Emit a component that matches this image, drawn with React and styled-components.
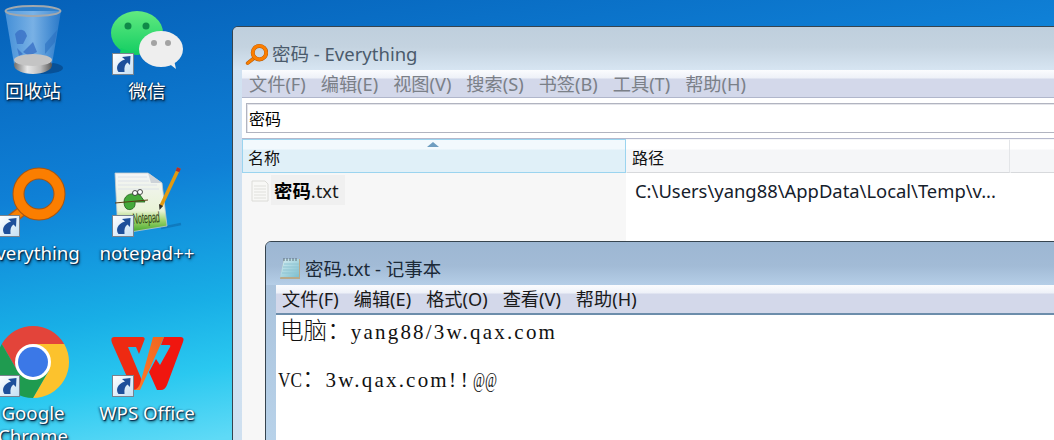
import React from "react";
import styled, { createGlobalStyle } from "styled-components";

const UI_FONT = `"Noto Sans", "Noto Sans CJK SC", sans-serif`;

const GlobalStyle = createGlobalStyle`
  html, body {
    margin: 0;
    padding: 0;
    overflow: hidden;
    font-family: ${UI_FONT};
  }
`;

const Desktop = styled.div`
  position: relative;
  width: 1054px;
  height: 440px;
  overflow: hidden;
  background: linear-gradient(170deg, #0560b8 0, #0f80d6 200px, #18aee6 330px, #2ac8f0 400px, #5fdaf6 470px);
`;

const IconGrid = styled.div`
  display: grid;
  grid-template-columns: 114px 114px;
  grid-template-rows: 162px 160px 118px;
  margin-left: -24px;
  width: 228px;
`;

const DesktopItem = styled.div`
  display: flex;
  flex-direction: column;
  align-items: center;
`;

const IconBox = styled.div`
  position: relative;
  width: 76px;
  height: 79px;
  flex: none;
  & > svg {
    display: block;
    overflow: visible;
  }
`;

const ItemLabel = styled.div`
  width: 108px;
  text-align: center;
  color: #fff;
  font-size: 18.7px;
  line-height: 23px;
  text-shadow: 1px 1px 1px #02264a, -1px 0 2px rgba(2, 38, 74, 0.55), 1px 2px 3px rgba(0, 0, 0, 0.6);
`;

const Badge = styled.svg`
  position: absolute;
  left: 3px;
  top: 53px;
  width: 22px;
  height: 22px;
`;

const Window = styled.section`
  position: absolute;
  left: ${(p) => p.$left}px;
  top: ${(p) => p.$top}px;
  width: ${(p) => p.$width}px;
  height: ${(p) => p.$height}px;
  box-sizing: border-box;
  border: 1px solid #36444f;
  border-radius: 6px 6px 0 0;
  padding-left: ${(p) => p.$chrome}px;
  background: ${(p) => p.$frame};
  display: flex;
  flex-direction: column;
  overflow: hidden;
`;

const TitleBar = styled.header`
  height: 43px;
  flex: none;
  margin-left: ${(p) => -p.$chrome}px;
  padding-left: ${(p) => p.$inset}px;
  padding-top: 15px;
  box-sizing: border-box;
  display: flex;
  align-items: flex-start;
  gap: 4px;
  font-size: 18.5px;
  line-height: 24px;
  white-space: nowrap;
  color: ${(p) => p.$color};
  background: ${(p) => p.$bg};
`;

const MenuBar = styled.nav`
  flex: none;
  height: ${(p) => p.$height}px;
  box-sizing: border-box;
  padding: 0 0 2px ${(p) => p.$inset}px;
  display: flex;
  align-items: center;
  gap: 15px;
  font-size: 18.2px;
  white-space: nowrap;
  color: ${(p) => p.$color};
  background: linear-gradient(#fbfcfe 0, #eef1f8 8px, #d3d8ea 9px, #d3d8ea 100%);
  border-bottom: ${(p) => p.$rule};
`;

const Client = styled.div`
  flex: 1;
  background: #fff;
  display: flex;
  flex-direction: column;
`;

const SearchArea = styled.div`
  flex: none;
  height: 41px;
  box-sizing: border-box;
  padding: 5px 0 0 4px;
  border-bottom: 1px solid #b5b8cc;
`;

const SearchInput = styled.div`
  height: 30px;
  box-sizing: border-box;
  border: 1px solid #b1b4c0;
  border-right: none;
  box-shadow: inset 1px 1px 0 #e4e5ea;
  padding-left: 2px;
  font-size: 16px;
  line-height: 30px;
  color: #000;
`;

const ListGrid = styled.div`
  flex: 1;
  display: grid;
  grid-template-columns: 384px 384px 1fr;
  grid-template-rows: 34px 1fr;
`;

const HeaderCell = styled.div`
  position: relative;
  box-sizing: border-box;
  padding: 6px 0 0 5px;
  font-size: 16px;
  line-height: 24px;
  color: #111;
  background: ${(p) =>
    p.$sorted
      ? "linear-gradient(#f2f9fd 0, #f2f9fd 9px, #e0f0f8 10px)"
      : "linear-gradient(#fff 0, #fff 9px, #f5f6f8 10px)"};
  border: 1px solid ${(p) => (p.$sorted ? "#9bd4ef" : "transparent")};
  border-bottom-color: ${(p) => (p.$sorted ? "#9bd4ef" : "#d7d9dc")};
  border-right-color: ${(p) => (p.$sorted ? "#9bd4ef" : "#e3e5e8")};
`;

const SortArrow = styled.span`
  position: absolute;
  left: 184px;
  top: 2px;
  width: 0;
  height: 0;
  border-left: 6px solid transparent;
  border-right: 6px solid transparent;
  border-bottom: 5px solid #6e9dc0;
`;

const NameColumn = styled.div`
  background: #f7f7f7;
  padding: 2px 0 0 9px;
  display: flex;
  align-items: flex-start;
  gap: 2px;
`;

const FileIcon = styled.svg`
  width: 18px;
  height: 22px;
  margin-top: 5px;
  flex: none;
`;

const FileName = styled.div`
  background: #f0f0f0;
  height: 30px;
  padding: 0 6px 0 3px;
  font-size: 18.4px;
  line-height: 32px;
  color: #1a1a1a;
  & b {
    color: #000;
    font-weight: 700;
  }
`;

const PathCell = styled.div`
  background: #fff;
  padding: 4px 0 0 9px;
  font-size: 18.4px;
  line-height: 28px;
  color: #15202b;
  white-space: nowrap;
`;

const EmptyCell = styled.div`
  background: #fff;
`;

const EditArea = styled.div`
  flex: 1;
  background: #fff;
  padding: 2px 0 0 2px;
  font-family: "Liberation Serif", "Noto Sans CJK SC", serif;
  font-size: 21px;
  letter-spacing: 2.2px;
  line-height: 24px;
  color: #111;
  white-space: pre;
`;

const EditLine = styled.div`
  height: 24px;
  padding-left: ${(p) => p.$indent}px;
`;

const Wide = styled.span`
  font-family: "Noto Sans CJK SC", sans-serif;
  font-size: 23.6px;
  font-weight: 300;
  letter-spacing: 0;
`;

// the original font is fixed-pitch, so wide latin letters get squeezed into its 12px cells
const Squeezed = styled.span`
  display: inline-block;
  width: ${(p) => p.$width}px;
  letter-spacing: 0;
  transform: scaleX(${(p) => p.$scale});
  transform-origin: left center;
`;

const Spaced = styled.span`
  letter-spacing: 5px;
`;

function Shortcut() {
  return (
    <Badge viewBox="0 0 22 22">
      <defs>
        <linearGradient id="badgeBg" x1="0" y1="0" x2="1" y2="1">
          <stop offset="0" stopColor="#ffffff" />
          <stop offset="1" stopColor="#c5dff3" />
        </linearGradient>
      </defs>
      <rect x="0.5" y="0.5" width="21" height="21" fill="url(#badgeBg)" stroke="#77838f" />
      <path d="M10 4 L18.5 3 L18 12 L15.5 9.5 C13 11 12 14 12.5 19 L6.5 19 C3.5 15 5 9 13 6.5 Z" fill="#1d4f9a" />
    </Badge>
  );
}

function RecycleBin() {
  return (
    <svg width="76" height="80" viewBox="0 0 76 80">
      <defs>
        <linearGradient id="binBody" x1="0" y1="0" x2="1" y2="0">
          <stop offset="0" stopColor="#4f97dc" />
          <stop offset="0.5" stopColor="#8dbeec" />
          <stop offset="1" stopColor="#2f7ccb" />
        </linearGradient>
        <linearGradient id="binBase" x1="0" y1="0" x2="1" y2="0">
          <stop offset="0" stopColor="#6e6e6e" />
          <stop offset="0.35" stopColor="#e8e8e8" />
          <stop offset="0.7" stopColor="#bdbdbd" />
          <stop offset="1" stopColor="#555" />
        </linearGradient>
      </defs>
      <ellipse cx="48" cy="68" rx="20" ry="6" fill="#06366c" opacity="0.5" />
      <path d="M10 11 L19 64 C24 76 52 76 57 64 L66 11 Z" fill="url(#binBody)" opacity="0.85" />
      <path d="M50 44 L62 30 L60 42 L50 54 Z" fill="#2c6fc0" opacity="0.6" />
      <path d="M20 34 C24 28 30 28 32 36 L28 44 L22 44 Z M28 52 L38 42 L42 52 L34 56 Z M22 48 L28 54 L24 56 Z" fill="#3a71c6" opacity="0.8" />
      <ellipse cx="38" cy="65" rx="19" ry="9" fill="url(#binBase)" />
      <ellipse cx="38" cy="60" rx="19" ry="6" fill="#c4c4c4" />
      <ellipse cx="38" cy="11" rx="27.5" ry="5" fill="#7fb7ea" fillOpacity="0.35" stroke="#a2a8ad" strokeWidth="2" />
    </svg>
  );
}

function WeChat() {
  return (
    <svg width="76" height="80" viewBox="0 0 76 80">
      <defs>
        <linearGradient id="wxGreen" x1="0" y1="0" x2="0" y2="1">
          <stop offset="0" stopColor="#62ea80" />
          <stop offset="1" stopColor="#12cd62" />
        </linearGradient>
      </defs>
      <ellipse cx="28" cy="33" rx="26" ry="22" fill="url(#wxGreen)" />
      <path d="M12 48 L10 58 L22 52 Z" fill="#14cf64" />
      <ellipse cx="52" cy="49" rx="22" ry="18" fill="#eeeeee" />
      <path d="M58 62 L67 69 L65 60 Z" fill="#eeeeee" />
      <circle cx="19" cy="26" r="3.5" fill="#0f8a48" />
      <circle cx="37" cy="26" r="3.5" fill="#0f8a48" />
      <circle cx="45" cy="43" r="3" fill="#a3a3a3" />
      <circle cx="59" cy="43" r="3" fill="#a3a3a3" />
    </svg>
  );
}

function Magnifier({ size = 76, box = "0 0 76 80", height = 80 }) {
  return (
    <svg width={size} height={height} viewBox={box} style={{ flex: "none" }}>
      <path d="M27 49 L8 64" stroke="#b45a12" strokeWidth="11" strokeLinecap="round" />
      <path d="M27 49 L8 64" stroke="#f77f00" strokeWidth="8" strokeLinecap="round" />
      <circle cx="44" cy="32" r="20.5" fill="none" stroke="#a85510" strokeWidth="12" />
      <circle cx="44" cy="32" r="20.5" fill="none" stroke="#fb7e00" strokeWidth="10" />
    </svg>
  );
}

function NotepadPP() {
  return (
    <svg width="76" height="80" viewBox="0 0 76 80">
      <defs>
        <linearGradient id="nppPage" x1="0" y1="0" x2="0" y2="1">
          <stop offset="0" stopColor="#f4f5f7" />
          <stop offset="0.62" stopColor="#e9f3d6" />
          <stop offset="0.78" stopColor="#9fd36a" />
          <stop offset="1" stopColor="#32a024" />
        </linearGradient>
      </defs>
      <path d="M52 66 L72 62" stroke="#0a4f8a" strokeWidth="2.5" opacity="0.35" />
      <path d="M6 11 L39 11 L53 21 L58 64 L9 72 Z" fill="url(#nppPage)" stroke="#c3c9cc" strokeWidth="0.8" />
      <path d="M39 11 L42 21 L53 21 Z" fill="#cdd3d8" />
      <path d="M9 15 H38 M9 19 H40 M9 23 H48 M9 27 H50" stroke="#dde2e8" />
      <path d="M15 40 C15 32 24 30 31 33 L36 40 L26 40 C27 46 22 49 18 47 C16 46 15 43 15 40 Z" fill="#45a93a" stroke="#1e5c1a" strokeWidth="0.8" />
      <circle cx="26" cy="31" r="2.5" fill="#fff" stroke="#222" strokeWidth="0.8" />
      <circle cx="31" cy="30" r="2.5" fill="#fff" stroke="#222" strokeWidth="0.8" />
      <path d="M6 41 L39 38" stroke="#5a3c12" strokeWidth="1" />
      <text x="0" y="0" fontFamily="Liberation Sans, sans-serif" fontSize="9" fill="#2b3b14" transform="translate(24 62) rotate(-4) scale(0.8 1.7)">Notepad</text>
      <path d="M70 6 L52 44" stroke="#e39a10" strokeWidth="3.5" />
      <path d="M70 6 L68.5 9.5" stroke="#b02f2f" strokeWidth="4" />
      <path d="M50 42 L54 44 L50.5 48 Z" fill="#30302a" />
    </svg>
  );
}

function Chrome() {
  return (
    <svg width="76" height="80" viewBox="0 -1 76 80">
      <path d="M6.8 21 A36 36 0 0 1 69.2 21 L38 21 L22.4 48 Z" fill="#e3443a" />
      <path d="M69.2 21 A36 36 0 0 1 38 75 L53.6 48 L38 21 Z" fill="#fcc22d" />
      <path d="M38 75 A36 36 0 0 1 6.8 21 L22.4 48 L53.6 48 Z" fill="#1f9b50" />
      <circle cx="38" cy="39" r="18" fill="#fff" />
      <circle cx="38" cy="39" r="15" fill="#3b78e7" />
    </svg>
  );
}

function Wps() {
  return (
    <svg width="76" height="80" viewBox="0 -1 76 80">
      <defs>
        <linearGradient id="wpsMid" x1="1" y1="0" x2="0" y2="1">
          <stop offset="0" stopColor="#f0661e" />
          <stop offset="1" stopColor="#ff7a2a" />
        </linearGradient>
      </defs>
      <path d="M5 14 H33 Q37 14 35 18 L30 31 L27 24 H19 L34 60 L29 67 H27 Q23 67 22 63 L3 20 Q1 14 5 14 Z" fill="#ee2a12" />
      <path d="M55 14 H71 Q76 14 74 19 L58 62 Q56 67 52 67 H48 L40 49 L47 36 L51 42 L61 24 Q62 22 60 22 H52 Z" fill="#f0160f" />
      <path d="M44 14 H55 L31 67 H25 Q29 66 31 61 Z" fill="url(#wpsMid)" />
    </svg>
  );
}

function TextFile() {
  return (
    <FileIcon viewBox="0 0 18 22">
      <path d="M1 1 H14 L17 4 V21 H1 Z" fill="#f8f8f6" stroke="#dcdcd8" />
      <path d="M3 6 H15 M3 9 H15 M3 12 H15 M3 15 H15 M3 18 H15" stroke="#e0e0dc" />
    </FileIcon>
  );
}

function NotepadIcon() {
  return (
    <svg width="22" height="23" viewBox="0 0 22 23" style={{ flex: "none" }}>
      <defs>
        <linearGradient id="padFill" x1="0" y1="0" x2="1" y2="1">
          <stop offset="0" stopColor="#d9eef2" />
          <stop offset="1" stopColor="#7bbfd0" />
        </linearGradient>
      </defs>
      <path d="M5 2 H21 V22 H1 Z" fill="#b8a98a" />
      <path d="M5 2 H20 V20 H1 Z" fill="url(#padFill)" />
      <path d="M5 7 H20 M4 10 H20 M4 13 H20 M3 16 H20" stroke="#8fc4d2" />
      <path d="M5 1 V4 M8 1 V4 M11 1 V4 M14 1 V4 M17 1 V4" stroke="#5c6f78" />
    </svg>
  );
}

const desktopItems = [
  { name: "回收站", icon: <RecycleBin /> },
  { name: "微信", icon: <WeChat />, link: true },
  { name: "everything", icon: <Magnifier />, link: true },
  { name: "notepad++", icon: <NotepadPP />, link: true },
  { name: "Google Chrome", icon: <Chrome />, link: true },
  { name: "WPS Office", icon: <Wps />, link: true },
];

const everythingMenu = ["文件(F)", "编辑(E)", "视图(V)", "搜索(S)", "书签(B)", "工具(T)", "帮助(H)"];
const notepadMenu = ["文件(F)", "编辑(E)", "格式(O)", "查看(V)", "帮助(H)"];

function EverythingWindow() {
  return (
    <Window $left={232} $top={26} $width={840} $height={430} $chrome={9} $frame="linear-gradient(#d2e2f1, #cfe0f0)">
      <TitleBar $chrome={9} $inset={12} $color="#4b5b6c" $bg="linear-gradient(#bfcfdd 0, #c4d3e0 20px, #d7e5f2 100%)">
        <Magnifier size={23} height={24} box="0 0 70 72" />
        <span>密码 - Everything</span>
      </TitleBar>
      <MenuBar $height={28} $inset={7} $color="#7b8088" $rule="1px solid #b0b6cb">
        {everythingMenu.map((m) => (
          <span key={m}>{m}</span>
        ))}
      </MenuBar>
      <Client>
        <SearchArea>
          <SearchInput>密码</SearchInput>
        </SearchArea>
        <ListGrid>
          <HeaderCell $sorted>
            <SortArrow />
            名称
          </HeaderCell>
          <HeaderCell>路径</HeaderCell>
          <HeaderCell />
          <NameColumn>
            <TextFile />
            <FileName>
              <b>密码</b>.txt
            </FileName>
          </NameColumn>
          <PathCell>C:\Users\yang88\AppData\Local\Temp\v...</PathCell>
          <EmptyCell />
        </ListGrid>
      </Client>
    </Window>
  );
}

function NotepadWindow() {
  return (
    <Window $left={265} $top={241} $width={800} $height={210} $chrome={10} $frame="linear-gradient(#a6bfd9, #b9d3ea)">
      <TitleBar $chrome={10} $inset={13} $color="#1c2a38" $bg="linear-gradient(#9db7d3 0, #a2bbd6 24px, #b5cee7 100%)">
        <NotepadIcon />
        <span>密码.txt - 记事本</span>
      </TitleBar>
      <MenuBar $height={30} $inset={6} $color="#1a1a1a" $rule="2px solid #6c8dab">
        {notepadMenu.map((m) => (
          <span key={m}>{m}</span>
        ))}
      </MenuBar>
      <EditArea>
        <EditLine $indent={2}>
          <Wide>电脑：</Wide>yang88/3w.qax.com
        </EditLine>
        <EditLine />
        <EditLine $indent={0}>
          <Squeezed $width={24} $scale={0.82}>VC</Squeezed>
          <Wide>：</Wide>3w.qax.com
          <Spaced>!!</Spaced>
          <Squeezed $width={24} $scale={0.62}>@@</Squeezed>
        </EditLine>
      </EditArea>
    </Window>
  );
}

export default function App() {
  return (
    <>
      <GlobalStyle />
      <Desktop>
        <IconGrid>
          {desktopItems.map((item) => (
            <DesktopItem key={item.name}>
              <IconBox>
                {item.icon}
                {item.link && <Shortcut />}
              </IconBox>
              <ItemLabel>{item.name}</ItemLabel>
            </DesktopItem>
          ))}
        </IconGrid>
        <EverythingWindow />
        <NotepadWindow />
      </Desktop>
    </>
  );
}
